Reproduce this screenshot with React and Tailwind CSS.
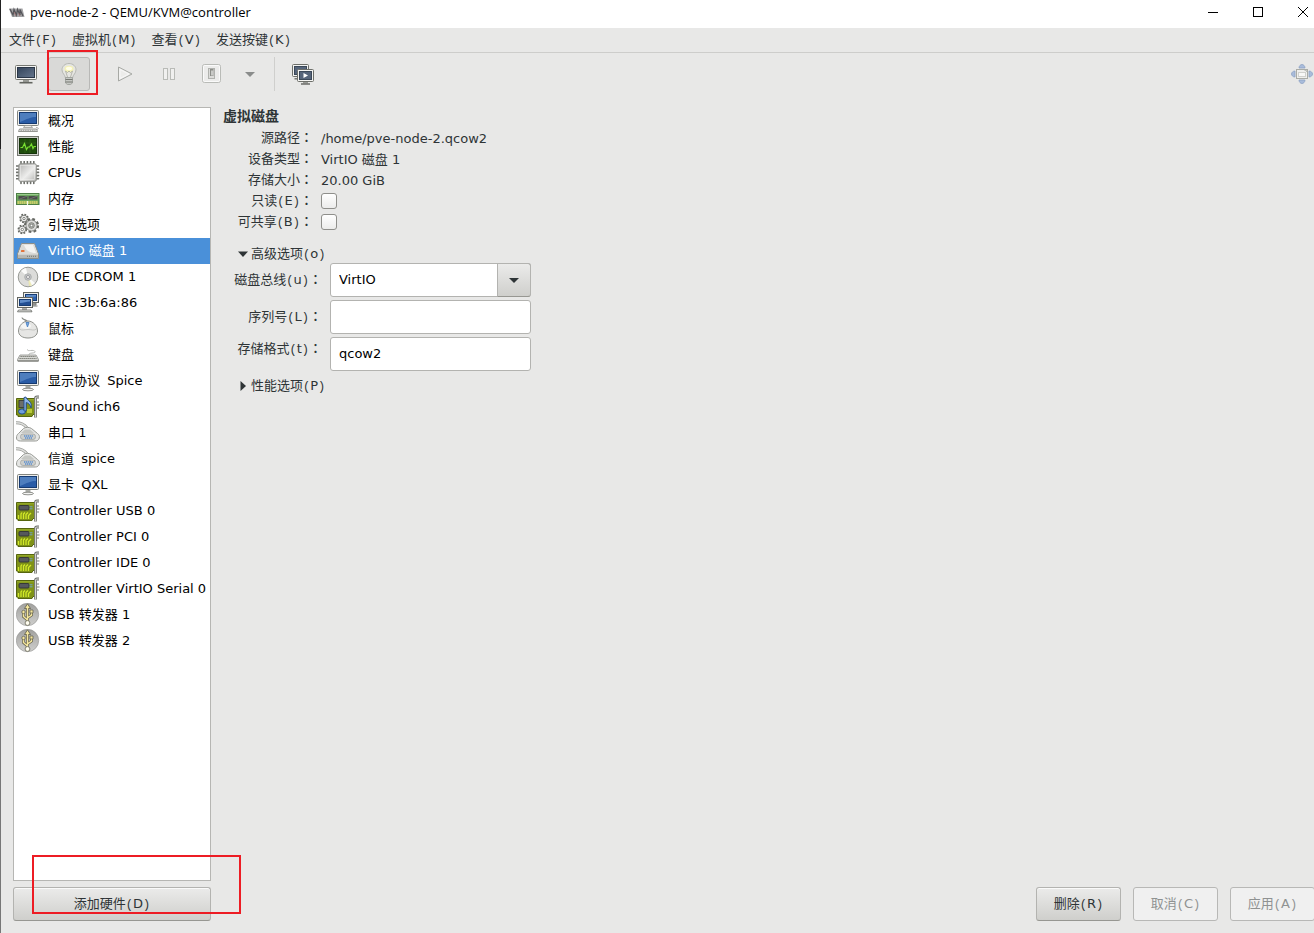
import { useState } from 'react'

function DisplayIcon({ base = 'stand' }) {
  return (
    <svg viewBox="0 0 24 24" className="size-6 shrink-0">
      <rect x="1.5" y="1.5" width="21" height="15" rx="1" fill="#eeeeec" stroke="#83857f" />
      <rect x="3.500" y="3.500" width="17" height="11" fill="#2a5ca6" stroke="#163a70" />
      <path d="M4 4h16v4c-5 0-9 2-16 5z" fill="#6794cf" opacity=".6" />
      {base === 'stand' ? (
        <>
          <path d="M9.500 17h5v3h-5z" fill="#a9aba6" />
          <ellipse cx="12" cy="20.500" rx="5.500" ry="1.300" fill="#f4f4f2" stroke="#777973" strokeWidth=".8" />
        </>
      ) : (
        <>
          <path d="M9 16.500h6l1.500 2h-9z" fill="#e9e9e7" stroke="#8b8d88" strokeWidth=".7" />
          <path d="M3.500 20h17l1 2.500h-19z" fill="#eeeeec" stroke="#7d7f7a" strokeWidth=".8" />
          <path d="M4.500 21.300h15" stroke="#888" strokeWidth=".8" strokeDasharray="1.500 .8" />
          <path d="M20 18.500c3 .3 3 1.200 1 2" fill="none" stroke="#999" strokeWidth=".8" />
        </>
      )}
    </svg>
  )
}

function OverviewIcon() {
  return <DisplayIcon base="keyboard" />
}

function PerformanceIcon() {
  return (
    <svg viewBox="0 0 24 24" className="size-6 shrink-0">
      <rect x="1.500" y="1.500" width="21" height="19" fill="#cfd1cc" stroke="#74766f" />
      <rect x="3.500" y="3.500" width="17" height="15" fill="#1f4d0d" stroke="#15330a" />
      <path d="M4 8h16M4 13h16M9 4v14M14 4v14" stroke="#34661b" strokeWidth=".7" />
      <path d="M4.500 12.500h2l2-4 2 6 1.500-2.500h1.500l2-3 1.500 4.500 1-2H20" fill="none" stroke="#78e030" strokeWidth="1.200" />
    </svg>
  )
}

function CpuIcon() {
  return (
    <svg viewBox="0 0 24 24" className="size-6 shrink-0">
      <defs>
        <linearGradient id="cpu" x2="1" y2="1">
          <stop offset="0" stopColor="#b2b2b0" />
          <stop offset=".55" stopColor="#ededec" />
          <stop offset="1" stopColor="#b3b3b1" />
        </linearGradient>
      </defs>
      <path
        d="M5 .5v22M8.200 .5v22M11.400 .5v22M14.600 .5v22M17.800 .5v22M.5 5h22M.5 8.200h22M.5 11.400h22M.5 14.600h22M.5 17.800h22"
        stroke="#6e706b"
        strokeWidth="1.600"
        strokeLinecap="round"
      />
      <rect x="2.800" y="2.800" width="17.500" height="17.500" rx="1.500" fill="url(#cpu)" stroke="#8c8e89" />
      <rect x="4.500" y="4.500" width="14" height="14" fill="none" stroke="#f2f2f1" strokeWidth=".7" opacity=".7" />
    </svg>
  )
}

function MemoryIcon() {
  return (
    <svg viewBox="0 0 24 24" className="size-6 shrink-0">
      <rect x=".5" y="6.500" width="22.500" height="11" fill="#6aa65d" stroke="#4d7f45" />
      <path d="M1 7.500h21.500" stroke="#9acb8c" />
      <rect x="2.500" y="9" width="9" height="3.500" fill="#4a4c49" />
      <rect x="12.500" y="9" width="9" height="3.500" fill="#4a4c49" />
      <path d="M2.500 12.500l9-3.500M12.500 12.500l9-3.500" stroke="#7d807b" strokeWidth=".7" />
      <path d="M1.500 15.500h20.500" stroke="#dfd66c" strokeWidth="3" strokeDasharray="1.300 .7" />
      <path d="M11.500 14v4" stroke="#eef5ec" strokeWidth="1.200" />
    </svg>
  )
}

function BootIcon() {
  return (
    <svg viewBox="0 0 24 24" className="size-6 shrink-0">
      <g fill="none" stroke="#666863">
        <circle cx="15.500" cy="12.500" r="6.300" strokeWidth="2.600" strokeDasharray="2.600 2.350" />
        <circle cx="8" cy="5.500" r="3.700" strokeWidth="2.200" strokeDasharray="1.600 1.300" />
        <circle cx="6.300" cy="16.500" r="3.700" strokeWidth="2.200" strokeDasharray="1.600 1.300" />
      </g>
      <g fill="#dcdcda" stroke="#666863" strokeWidth=".8">
        <circle cx="15.500" cy="12.500" r="5.600" />
        <circle cx="15.500" cy="12.500" r="2.800" fill="#c2c4c0" />
        <circle cx="15.500" cy="12.500" r="1.300" fill="#fff" />
        <circle cx="8" cy="5.500" r="3.300" fill="#f0f0ef" />
        <circle cx="8" cy="5.500" r="1.200" fill="#fff" />
        <circle cx="6.300" cy="16.500" r="3.300" fill="#f0f0ef" />
        <circle cx="6.300" cy="16.500" r="1.200" fill="#fff" />
      </g>
    </svg>
  )
}

function DiskIcon() {
  return (
    <svg viewBox="0 0 24 24" className="size-6 shrink-0">
      <path d="M5.500 4.500h13L22.500 15v4.500h-21V15z" fill="#e9e9e6" stroke="#8c8e89" strokeLinejoin="round" />
      <path d="M6 5.500h12L21.500 15h-19z" fill="#dadad7" />
      <path d="M8 6h9l3 8c-6 0-10-2-12-8z" fill="#f3f3f1" />
      <path d="M2 15.500h20v3.500H2z" fill="#b6b7b3" />
      <path d="M11 17.300h10" stroke="#777973" strokeDasharray="1 1" />
      <rect x="5" y="11" width="3.500" height="2" rx=".6" fill="#e2743b" />
    </svg>
  )
}

function DiscIcon() {
  return (
    <svg viewBox="0 0 24 24" className="size-6 shrink-0">
      <circle cx="12" cy="12" r="9.800" fill="#dcdcda" stroke="#989a95" />
      <path d="M12 12L5 6a9 9 0 0 1 5-3zM12 12l7 6a9 9 0 0 1-5 3z" fill="#fbfbfa" />
      <path d="M12 12l4 8.500-3 .8z" fill="#e8e49b" opacity=".7" />
      <circle cx="12" cy="12" r="3.300" fill="#c4c6cc" stroke="#a5a7a3" strokeWidth=".8" />
      <circle cx="12" cy="12" r="1.500" fill="#fff" stroke="#888" strokeWidth=".8" />
    </svg>
  )
}

function NetworkIcon() {
  return (
    <svg viewBox="0 0 24 24" className="size-6 shrink-0">
      <rect x="7.500" y="1.500" width="15" height="10" fill="#eeeeec" stroke="#62645f" />
      <rect x="9.500" y="3.500" width="11" height="6" fill="#2f62ad" stroke="#173c73" />
      <path d="M10 4h10v1.500c-4 0-6 1-10 1.500z" fill="#5f8cc9" />
      <path d="M16 12h4v2h-4zM17 15h4.500" fill="#aaa" stroke="#7b7d78" />
      <rect x="1.500" y="6.500" width="15" height="10" fill="#eeeeec" stroke="#62645f" />
      <rect x="3.500" y="8.500" width="11" height="6" fill="#214e93" stroke="#173c73" />
      <path d="M4 9h10v1.500c-4 0-6 1.500-10 1.500z" fill="#5f8cc9" />
      <path d="M6 17h5v2H6z" fill="#aaa" />
      <path d="M2.500 19h12.500l1 1.800H1.500z" fill="#eeeeec" stroke="#62645f" strokeWidth=".8" />
    </svg>
  )
}

function MouseIcon() {
  return (
    <svg viewBox="0 0 24 24" className="size-6 shrink-0">
      <path d="M6 .5c0 3 5 1 5.500 5" fill="none" stroke="#888a85" strokeWidth="1.200" />
      <path d="M12 4c5 0 9.500 5 9.500 10 0 4.500-4 7-9.500 7s-9.500-2.500-9.500-7C2.500 9 7 4 12 4z" fill="#e6e6e4" stroke="#8f918c" />
      <path d="M3.500 12c3 2 4 .5 8.500.5s5.500 1.500 8.500-.5" fill="none" stroke="#bdbebb" strokeWidth=".8" />
      <ellipse cx="10" cy="9" rx="5" ry="3" fill="#fafaf9" opacity=".8" />
      <path d="M10 5.500l1.500 4.500L13 5.500z" fill="#7aa9e2" stroke="#4d82c2" strokeWidth=".9" />
    </svg>
  )
}

function KeyboardIcon() {
  return (
    <svg viewBox="0 0 24 24" className="size-6 shrink-0">
      <path d="M13 12c-1-3 7-1 6-3.500S11 9 11.500 6.500" fill="none" stroke="#b5b7b3" />
      <path d="M4 12h16l2.500 4.500V18H1.500v-1.500z" fill="#d7d8d4" stroke="#989a95" strokeWidth=".9" />
      <path d="M4.500 13.500h15M3.500 15.500h17" stroke="#74766f" strokeWidth="1.200" strokeDasharray="1.300 .7" />
      <path d="M2 18h20.500" stroke="#6c6e69" />
    </svg>
  )
}

function BoardIcon({ children }) {
  return (
    <svg viewBox="0 0 24 24" className="size-6 shrink-0">
      <path d="M.5 3.500h18.500v16h-2l-1 2H2v-1.500H.5z" fill="#7f9218" stroke="#56650f" />
      <path d="M1 4.800h17" stroke="#a2b534" strokeWidth=".8" />
      {children}
      <path d="M23 2h-2c-1 0-1.500.5-1.500 1.500V22.500" fill="none" stroke="#6f716c" strokeWidth="2.800" />
      <path d="M23 2h-2c-1 0-1.500.5-1.500 1.500V22.500" fill="none" stroke="#d3d4d1" strokeWidth="1.200" />
      <path d="M21 7h2M21 10h2.500M21 13h2" fill="none" stroke="#7b7d78" strokeWidth="1.200" />
    </svg>
  )
}

function ControllerIcon() {
  return (
    <BoardIcon>
      <rect x="3" y="6.500" width="10" height="4.500" rx="1" fill="#55585c" stroke="#303236" strokeWidth=".9" />
      <path d="M13.500 7.800h3M13.500 9.800h3" stroke="#6fa0c8" />
      <path d="M2.500 20v-4M5 20v-5l1-1.500M7.500 20v-5l1.500-1.500M10 20v-4.500l2-2M12.500 20v-3.500l2.500-2.500" fill="none" stroke="#d3ea28" strokeWidth="1.300" />
    </BoardIcon>
  )
}

function SoundIcon() {
  return (
    <BoardIcon>
      <rect x="3" y="5.500" width="7" height="7" fill="#6c6e69" stroke="#333" strokeWidth=".8" />
      <rect x="11" y="14" width="5" height="4" fill="#b8c93a" />
      <ellipse cx="6" cy="16.500" rx="3.500" ry="2.600" fill="#6f9edc" stroke="#1f4a87" />
      <path d="M8 16V2.500l2-.5c0 3 7 4 5 11-.5-3-2.500-5-4.800-5.500V16z" fill="#8eb6ea" stroke="#1f4a87" strokeWidth=".9" />
    </BoardIcon>
  )
}

function SerialIcon() {
  return (
    <svg viewBox="0 0 24 24" className="size-6 shrink-0">
      <path d="M0 1.800c5 0 8 1 11 5" fill="none" stroke="#989a95" strokeWidth="3" />
      <path d="M0 1.800c5 0 8 1 11 5" fill="none" stroke="#dcdddb" strokeWidth="1.400" />
      <path d="M7.500 7.500c2-1.500 6-1.500 8 0l6 5c1.500 1 2.300 2.500 1.800 4.500-.5 2-2 3-4 3H4.500c-2.500 0-4-1-4-3 0-2 .5-3.500 2-4.500z" fill="#e4e5e3" stroke="#989a95" />
      <path d="M9 8.500h5l4 3.500H5z" fill="#c5c7c3" />
      <rect x="4.500" y="13" width="15" height="5.500" rx="2.500" fill="#cccecb" stroke="#a5a7a3" strokeWidth=".8" />
      <path d="M8 15h9M9 17h7" stroke="#5b8fd0" strokeWidth="1.400" strokeDasharray="1.300 .6" />
    </svg>
  )
}

function UsbIcon() {
  return (
    <svg viewBox="0 0 24 24" className="size-6 shrink-0">
      <defs>
        <linearGradient id="usb" x2="0" y2="1">
          <stop offset="0" stopColor="#a0a09e" />
          <stop offset="1" stopColor="#cfcfcd" />
        </linearGradient>
      </defs>
      <circle cx="11.500" cy="11.500" r="11.200" fill="url(#usb)" stroke="#969694" strokeWidth=".6" />
      <path d="M11.500 20V4M11.500 17L7.500 13.500V9.500M11.500 15l4-3V8.500" fill="none" stroke="#5c5a48" strokeWidth="2.800" />
      <path d="M11.500 .8l3 4.700h-6z" fill="#f5e79e" stroke="#5c5a48" strokeWidth=".8" />
      <path d="M11.500 20V4M11.500 17L7.500 13.500V9.500M11.500 15l4-3V8.500" fill="none" stroke="#f5e79e" strokeWidth="1.500" />
      <circle cx="7.500" cy="9" r="1.700" fill="#f5e79e" stroke="#5c5a48" strokeWidth=".7" />
      <path d="M14 7h3v3h-3z" fill="#f5e79e" stroke="#5c5a48" strokeWidth=".7" />
      <circle cx="11.500" cy="20" r="2.400" fill="#fffdf0" stroke="#5c5a48" strokeWidth=".7" />
    </svg>
  )
}

function AppLogo() {
  return (
    <svg viewBox="0 0 16 16" className="size-4 shrink-0">
      <path d="M0 2.500h13.500l2 8.500H3z" fill="#a3a3a5" />
      <path d="M1 3l3 6 1-5.500L7.500 9l1-5.500L11 9V3.500L14 10" fill="none" stroke="#55555a" strokeWidth="1.300" />
      <path d="M5 6l2 4M9.500 7l1.500 3" stroke="#9b6a6a" strokeWidth=".8" />
    </svg>
  )
}

function ConsoleIcon() {
  return (
    <svg viewBox="0 0 24 24" className="size-6">
      <defs>
        <linearGradient id="screen" x2="1" y2="1">
          <stop offset="0" stopColor="#33445b" />
          <stop offset="1" stopColor="#66768c" />
        </linearGradient>
      </defs>
      <rect x="1.500" y="3.500" width="21" height="14" rx="1" fill="#f4f4f2" stroke="#777973" />
      <rect x="3.500" y="5.500" width="17" height="10" fill="url(#screen)" stroke="#2a3647" />
      <path d="M9 18h6v2H9z" fill="#999b96" />
      <path d="M5.500 20.700h13" stroke="#62645f" strokeWidth="1.600" />
    </svg>
  )
}

function BulbIcon() {
  return (
    <svg viewBox="0 0 24 24" className="size-6">
      <path d="M12 1.500c4 0 7 2.800 7 6.300 0 3.700-3 4.700-3.500 8.200h-7C8 12.500 5 11.500 5 7.800c0-3.500 3-6.300 7-6.300z" fill="#e6e6e2" stroke="#b7b9b4" />
      <ellipse cx="12" cy="7" rx="4.500" ry="3.200" fill="#f5f2b8" />
      <ellipse cx="12" cy="6.500" rx="3" ry="1.700" fill="#fffeea" />
      <path d="M10.500 15l-2-6 2 1.500L12 9l1.500 1.500 2-1.500-2 6" fill="none" stroke="#aaaba0" strokeWidth=".8" />
      <path d="M8.500 15.500h7V21l-2 1.500h-3l-2-1.500z" fill="#c6c8c4" stroke="#989a95" strokeWidth=".8" />
      <path d="M8.500 17.500h7M8.500 20h7" stroke="#777973" />
    </svg>
  )
}

function PlayIcon() {
  return (
    <svg viewBox="0 0 24 24" className="size-6">
      <path d="M5.500 5v14L19 12z" fill="#ececea" stroke="#a7a9a5" strokeLinejoin="round" />
      <path d="M7 7.500v9l9-4.500z" fill="none" stroke="#fafafa" strokeWidth=".8" />
    </svg>
  )
}

function PauseIcon() {
  return (
    <svg viewBox="0 0 24 24" className="size-6" fill="#f0f0ef" stroke="#b9bbb7">
      <rect x="6.500" y="6.500" width="4" height="11" />
      <rect x="13.500" y="6.500" width="4" height="11" />
    </svg>
  )
}

function ShutdownIcon() {
  return (
    <svg viewBox="0 0 24 24" className="size-6">
      <rect x="2.500" y="2.500" width="18" height="18" rx="2" fill="#ececeb" stroke="#b9bbb7" />
      <rect x="3.500" y="3.500" width="16" height="16" rx="1" fill="none" stroke="#fafafa" />
      <rect x="8.500" y="6.500" width="6" height="10" fill="#dcdcda" stroke="#b0b2ae" />
      <rect x="10" y="7" width="3.500" height="7" fill="#8c8e89" />
      <rect x="11" y="8.500" width="2.500" height="5" fill="#c9cac7" />
    </svg>
  )
}

function SnapshotsIcon() {
  return (
    <svg viewBox="0 0 24 24" className="size-6">
      <rect x="1.500" y="2.500" width="16" height="12" rx="1" fill="#f4f4f2" stroke="#6d6f6a" />
      <rect x="3.500" y="4.500" width="12" height="8" fill="#56657b" stroke="#3b4859" />
      <path d="M3.500 16.800h4" stroke="#6d6f6a" strokeWidth="1.400" />
      <rect x="6.500" y="7.500" width="16" height="12" rx="1" fill="#f4f4f2" stroke="#6d6f6a" />
      <rect x="8.500" y="9.500" width="12" height="8" fill="#56657b" stroke="#3b4859" />
      <path d="M12.500 11v5l4.500-2.500z" fill="#fff" />
      <path d="M12 20h5v1.500h-5z" fill="#999b96" />
      <path d="M10 22h9" stroke="#62645f" strokeWidth="1.400" />
    </svg>
  )
}

function FullscreenIcon() {
  return (
    <svg viewBox="0 0 24 24" className="size-6">
      <g fill="#a9bcdb" stroke="#8ea2c4" strokeWidth=".8">
        <path d="M9 6c0-2 1.500-3.500 3-3.500S15 4 15 6zM9 18c0 2 1.500 3.500 3 3.500s3-1.500 3-3.500zM5 9c-2 0-3.500 1.500-3.500 3S3 15 5 15zM19 9c2 0 3.500 1.500 3.500 3S21 15 19 15z" />
      </g>
      <rect x="6.500" y="7.500" width="11" height="9" fill="#efefed" stroke="#aaaca7" />
      <rect x="8.500" y="10.500" width="7" height="4" fill="#f8f8f7" stroke="#d0d1ce" />
      <path d="M14.500 8.500h2v1.500" fill="none" stroke="#b0b2ad" strokeWidth=".8" />
    </svg>
  )
}

const MENUS = ['文件(F)', '虚拟机(M)', '查看(V)', '发送按键(K)']

const DEVICES = [
  { icon: OverviewIcon, name: '概况' },
  { icon: PerformanceIcon, name: '性能' },
  { icon: CpuIcon, name: 'CPUs' },
  { icon: MemoryIcon, name: '内存' },
  { icon: BootIcon, name: '引导选项' },
  { icon: DiskIcon, name: 'VirtIO 磁盘 1' },
  { icon: DiscIcon, name: 'IDE CDROM 1' },
  { icon: NetworkIcon, name: 'NIC :3b:6a:86' },
  { icon: MouseIcon, name: '鼠标' },
  { icon: KeyboardIcon, name: '键盘' },
  { icon: DisplayIcon, name: '显示协议 Spice' },
  { icon: SoundIcon, name: 'Sound ich6' },
  { icon: SerialIcon, name: '串口 1' },
  { icon: SerialIcon, name: '信道 spice' },
  { icon: DisplayIcon, name: '显卡 QXL' },
  { icon: ControllerIcon, name: 'Controller USB 0' },
  { icon: ControllerIcon, name: 'Controller PCI 0' },
  { icon: ControllerIcon, name: 'Controller IDE 0' },
  { icon: ControllerIcon, name: 'Controller VirtIO Serial 0' },
  { icon: UsbIcon, name: 'USB 转发器 1' },
  { icon: UsbIcon, name: 'USB 转发器 2' },
]

// Mnemonic brackets and the space between a Chinese and a Latin word are set
// in the wider monospace face, the full-width colon in the face that centres it.
function Label({ text }) {
  return (
    <span>
      {text.split(/([()]|：|(?<=[\u4e00-\u9fff]) (?=[A-Za-z]))/).map((part, i) => {
        if (part === '(' || part === ')' || part === ' ') {
          return (
            <span key={i} className="font-['Liberation_Mono',monospace] text-xs leading-none">
              {part}
            </span>
          )
        }
        if (part === '：') {
          return (
            <span key={i} className="font-['Noto_Sans_CJK_TC',sans-serif] leading-none font-medium">
              {part}
            </span>
          )
        }
        return part
      })}
    </span>
  )
}

function ToolButton({ label, className = '', children, ...rest }) {
  return (
    <button
      type="button"
      aria-label={label}
      className={`flex h-[34px] items-center justify-center rounded-[3px] ${className}`}
      {...rest}
    >
      {children}
    </button>
  )
}

function PushButton({ text, className = '', ...rest }) {
  return (
    <button
      type="button"
      className={`h-[34px] rounded-[3px] border border-[#b3b3b0] border-b-[#979792] bg-linear-to-b from-[#ebebea] to-[#cfcfcc] text-[#2e3436] shadow-[inset_0_1px_0_#fafafa] disabled:border-[#b8b8b6] disabled:bg-[#f0f0f0] disabled:bg-none disabled:text-[#8f9292] disabled:shadow-none ${className}`}
      {...rest}
    >
      <Label text={text} />
    </button>
  )
}

function CheckRow({ id, text }) {
  return (
    <>
      <label htmlFor={id} className="text-right leading-5">
        <Label text={text} />
      </label>
      <input
        id={id}
        type="checkbox"
        className="mt-0.5 size-4 appearance-none rounded-[3px] border border-[#8f8f8b] bg-linear-to-b from-white to-[#ececeb] checked:from-[#4a90d9] checked:to-[#4a90d9]"
      />
    </>
  )
}

const FIELD = 'h-[34px] w-full rounded-[3px] border border-[#b3b3b0] bg-white px-2 text-black outline-none'

function DiskDetails() {
  return (
    <form className="ml-3 flex flex-1 flex-col">
      <h1 className="text-sm leading-[18px] font-bold">虚拟磁盘</h1>
      <div className="mt-[3px] grid auto-rows-[21px] grid-cols-[90px_1fr] gap-x-2 leading-[21px]">
        <span className="text-right leading-5">
          <Label text="源路径：" />
        </span>
        <span>/home/pve-node-2.qcow2</span>
        <span className="text-right leading-5">
          <Label text="设备类型：" />
        </span>
        <Label text="VirtIO 磁盘 1" />
        <span className="text-right leading-5">
          <Label text="存储大小：" />
        </span>
        <span>20.00 GiB</span>
        <CheckRow id="readonly" text="只读(E)：" />
        <CheckRow id="shareable" text="可共享(B)：" />
      </div>

      <button type="button" aria-expanded="true" className="mt-3 ml-[14px] flex h-[18px] items-center gap-0.5 self-start">
        <svg viewBox="0 0 12 12" className="size-3 fill-[#2e3436]">
          <path d="M1 3.500h10L6 9z" />
        </svg>
        <Label text="高级选项(o)" />
      </button>
      <div className="grid grid-cols-[99px_201px] items-center gap-x-2 gap-y-[3px]">
        <label htmlFor="bus" className="text-right">
          <Label text="磁盘总线(u)：" />
        </label>
        <div className="relative">
          <select id="bus" defaultValue="VirtIO" className={`${FIELD} appearance-none`}>
            <option>VirtIO</option>
            <option>IDE</option>
            <option>SATA</option>
            <option>SCSI</option>
            <option>USB</option>
          </select>
          <span className="pointer-events-none absolute inset-y-0 right-0 flex w-[34px] items-center justify-center rounded-r-[3px] border border-[#b3b3b0] border-b-[#979792] bg-linear-to-b from-[#ebebea] to-[#cfcfcc]">
            <svg viewBox="0 0 12 12" className="size-3 fill-[#2e3436]">
              <path d="M1 4h10L6 9z" />
            </svg>
          </span>
        </div>
        <label htmlFor="serial" className="text-right">
          <Label text="序列号(L)：" />
        </label>
        <input id="serial" type="text" className={`${FIELD} pb-0.5`} />
        <label htmlFor="format" className="self-start pt-0.5 text-right">
          <Label text="存储格式(t)：" />
        </label>
        <input id="format" type="text" defaultValue="qcow2" className={`${FIELD} pb-0.5`} />
      </div>

      <button type="button" aria-expanded="false" className="mt-1.5 ml-[14px] flex h-[18px] items-center gap-0.5 self-start">
        <svg viewBox="0 0 12 12" className="size-3 fill-[#2e3436]">
          <path d="M3.500 1v10L9 6z" />
        </svg>
        <Label text="性能选项(P)" />
      </button>
    </form>
  )
}

export default function App() {
  const [selected, setSelected] = useState(5)

  return (
    <div className="relative flex h-screen overflow-hidden bg-[#e8e8e7] font-['DejaVu_Sans','Noto_Sans_CJK_SC',sans-serif] text-[13px] text-[#2e3436]">
      <div className="w-px shrink-0 bg-linear-to-b from-[#222] from-16% via-[#777] via-16% to-[#777] to-85%" />
      <div className="flex min-w-0 flex-1 flex-col">
        <header className="flex h-7 shrink-0 items-center bg-white pl-2 text-black">
          <AppLogo />
          <span className="ml-[5px] flex-1 pb-0.5 font-['Open_Sans',sans-serif]">pve-node-2 - QEMU/KVM@controller</span>
          <div className="flex pb-1">
            <button type="button" aria-label="Minimize" className="flex h-6 w-[45px] items-center justify-center">
              <svg viewBox="0 0 12 12" className="size-3" stroke="#000" fill="none">
                <path d="M1 6.500h10" />
              </svg>
            </button>
            <button type="button" aria-label="Maximize" className="flex h-6 w-[45px] items-center justify-center">
              <svg viewBox="0 0 12 12" className="size-3" stroke="#000" fill="none">
                <rect x="1.500" y="1.500" width="9" height="9" />
              </svg>
            </button>
            <button type="button" aria-label="Close" className="-mr-3 flex h-6 w-[46px] items-center justify-center">
              <svg viewBox="0 0 12 12" className="size-3" stroke="#000" fill="none">
                <path d="M1 1l10 10M11 1L1 11" />
              </svg>
            </button>
          </div>
        </header>

        <nav className="flex h-[25px] shrink-0 items-center gap-[15px] border-b border-[#cdcdcb] pl-2">
          {MENUS.map((menu) => (
            <button key={menu} type="button">
              <Label text={menu} />
            </button>
          ))}
        </nav>

        <div className="flex h-[42px] shrink-0 items-center pl-1">
          <ToolButton label="Console" className="w-[42px]">
            <ConsoleIcon />
          </ToolButton>
          <ToolButton label="Details" aria-pressed="true" className="ml-px w-[42px] border border-[#b8b8b6] bg-[#d9d9d7]">
            <BulbIcon />
          </ToolButton>
          <ToolButton label="Run" className="ml-[13px] w-11">
            <PlayIcon />
          </ToolButton>
          <ToolButton label="Pause" className="w-11">
            <PauseIcon />
          </ToolButton>
          <ToolButton label="Shut down" className="w-[42px]">
            <ShutdownIcon />
          </ToolButton>
          <ToolButton label="Shut down options" className="w-[34px]">
            <svg viewBox="0 0 12 12" className="size-3 fill-[#8a8c8b]">
              <path d="M1 4h10L6 9z" />
            </svg>
          </ToolButton>
          <span className="ml-[7px] h-[34px] w-px bg-[#cfcfcd]" />
          <ToolButton label="Snapshots" className="ml-[7px] w-[42px]">
            <SnapshotsIcon />
          </ToolButton>
          <ToolButton label="Fullscreen" className="ml-auto w-6">
            <FullscreenIcon />
          </ToolButton>
        </div>

        <main className="flex min-h-0 flex-1 pt-3 pl-3">
          <ul className="w-[198px] shrink-0 overflow-hidden border border-[#b6b6b3] bg-white text-black">
            {DEVICES.map(({ icon: Icon, name }, i) => (
              <li key={name}>
                <button
                  type="button"
                  onClick={() => setSelected(i)}
                  className={`flex h-[26px] w-full items-center gap-2 pl-0.5 whitespace-nowrap ${
                    i === selected ? 'bg-[#4a90d9] text-white' : ''
                  }`}
                >
                  <Icon />
                  <Label text={name} />
                </button>
              </li>
            ))}
          </ul>
          <DiskDetails />
        </main>

        <footer className="flex shrink-0 gap-3 pt-1.5 pb-3 pl-3">
          <PushButton text="添加硬件(D)" className="w-[198px]" />
          <PushButton text="删除(R)" className="ml-auto w-[85px]" />
          <PushButton text="取消(C)" className="w-[85px]" disabled />
          <PushButton text="应用(A)" className="-mr-px w-[85px]" disabled />
        </footer>
      </div>

      {/* annotation frames */}
      <div className="pointer-events-none absolute top-[50px] left-[47px] h-[45px] w-[51px] border-2 border-[#ed1c24]" />
      <div className="pointer-events-none absolute bottom-[19px] left-8 h-[59px] w-[209px] border-2 border-[#ed1c24]" />
    </div>
  )
}
